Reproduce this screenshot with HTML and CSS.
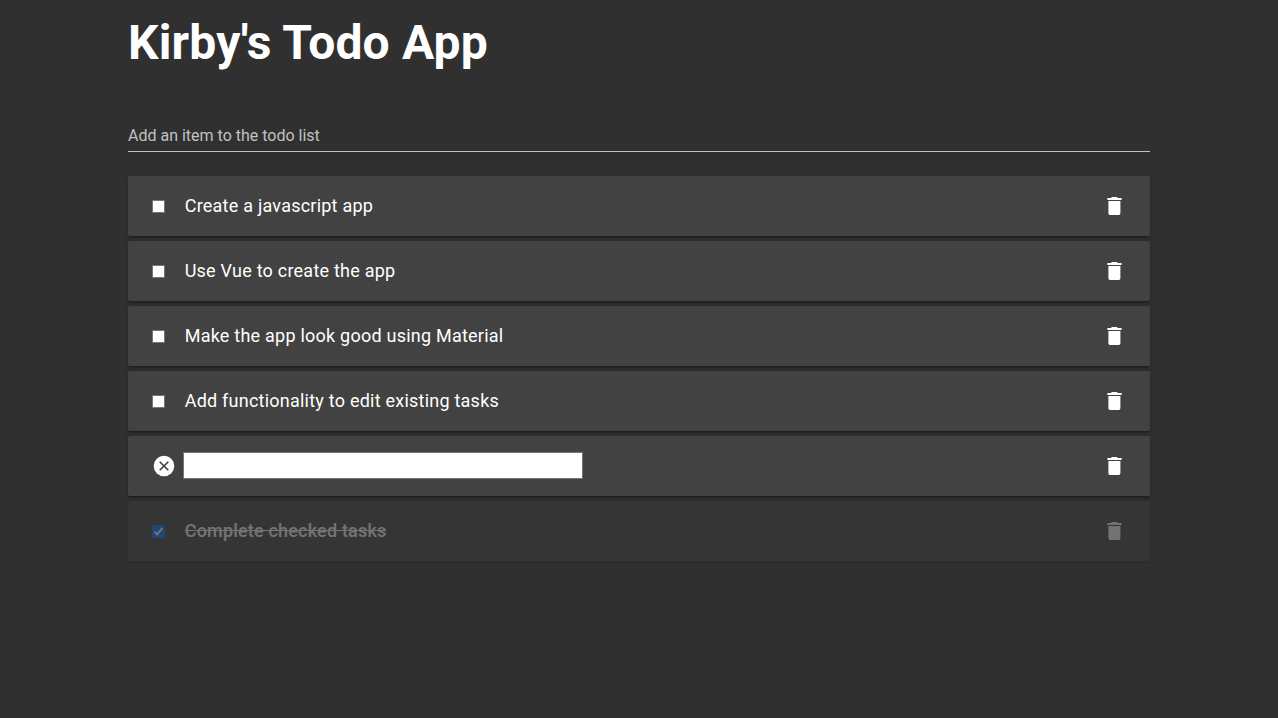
FILE: index.html
```html
<!DOCTYPE html>
<html lang="en">
<head>
<meta charset="utf-8">
<title>Kirby's Todo App</title>
<link rel="stylesheet" href="styles.css">
</head>
<body>
<svg class="sprites" width="0" height="0"><symbol id="trash" viewBox="-0.400 0 24 24"><path d="M6 19c0 1.100.6 2 1.600 2h8.800c1 0 1.600-.9 1.600-2V7H6v12zM19.200 4h-3.700l-1-1h-5l-1 1H5v2h14.200V4z"/></symbol></svg>
<main class="app">
  <h1 class="title">Kirby's Todo App</h1>
  <input class="new-item" type="text" placeholder="Add an item to the todo list">
  <ul class="list">
    <li class="card"><span class="box"></span><span class="label">Create a javascript app</span><svg class="trash"><use href="#trash"/></svg></li>
    <li class="card"><span class="box"></span><span class="label">Use Vue to create the app</span><svg class="trash"><use href="#trash"/></svg></li>
    <li class="card"><span class="box"></span><span class="label">Make the app look good using Material</span><svg class="trash"><use href="#trash"/></svg></li>
    <li class="card"><span class="box"></span><span class="label">Add functionality to edit existing tasks</span><svg class="trash"><use href="#trash"/></svg></li>
    <li class="card"><svg class="cancel" viewBox="0 0 24 24"><circle cx="12" cy="12" r="10.300"/><path d="M7.700 7.700l8.600 8.600M16.300 7.700l-8.600 8.600"/></svg><input class="edit" type="text"><svg class="trash"><use href="#trash"/></svg></li>
    <li class="card done"><span class="box checked"><svg viewBox="0 0 13 13"><path d="M2.500 6.700l2.700 2.700L10.300 3.100"/></svg></span><span class="label">Complete checked tasks</span><svg class="trash"><use href="#trash"/></svg></li>
  </ul>
</main>
</body>
</html>
```
FILE: styles.css
```css
* { box-sizing: border-box; }
html, body { height: 100%; }
body { margin: 0; background: #303030; color: #fff; font-family: Roboto, sans-serif; overflow: hidden; }
.sprites { display: block; height: 0; }
.app { width: 1022px; margin: 0 auto; padding-top: 15px; }
.title { margin: 0; font-size: 48px; line-height: 56px; font-weight: 700; letter-spacing: .16px; }
.new-item { display: block; width: 100%; height: 32px; margin: 49px 0 24px; padding: 0; border: 0; border-bottom: 1px solid #c1c1c1; background: transparent; color: #fff; font: 400 16px/31px Roboto, sans-serif; outline: 0; }
.new-item::placeholder { color: #c1c1c1; opacity: 1; }
.list { display: flex; flex-direction: column; gap: 5px; margin: 0; padding: 0; list-style: none; }
.card { display: flex; align-items: center; height: 60px; padding: 0 24px; border-radius: 2px; background: #424242; box-shadow: 0 3px 1px -2px rgba(0,0,0,.2), 0 2px 2px rgba(0,0,0,.14), 0 1px 5px rgba(0,0,0,.12); }
.box { width: 13px; height: 13px; margin: 1px 19.700px 0 0; border: 1px solid #767676; border-radius: 1px; background: #fff; }
.label { font-size: 18px; line-height: 24px; font-weight: 450; letter-spacing: .23px; }
.trash { width: 24px; height: 24px; margin-left: auto; fill: #fff; }
.cancel { width: 24px; height: 24px; fill: #fff; }
.cancel path { stroke: #424242; stroke-width: 1.600; }
.edit { width: 400px; height: 27px; margin: 0 0 1px 7px; padding: 0; border: 1px solid #767676; background: #fff; font: 18px Roboto, sans-serif; }
.done { opacity: .32; }
.done .label { font-weight: 500; letter-spacing: .19px; text-decoration: line-through; }
.checked { border: 0; background: #0075ff; }
.checked svg { display: block; width: 13px; height: 13px; fill: none; stroke: #fff; stroke-width: 2; }
```
